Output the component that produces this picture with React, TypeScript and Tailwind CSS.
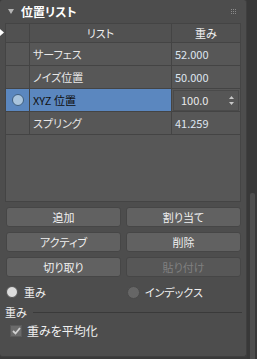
import React from "react";

const font = { fontFamily: '"Noto Sans CJK JP", "Liberation Sans", sans-serif' };

function Row({ name, value, selected }: { name: string; value: string; selected?: boolean }) {
  return (
    <div className={`flex h-[23px] border-b border-[#444] ${selected ? "bg-[#5b87bf]" : ""}`}>
      <div className="w-[24px] shrink-0 border-r border-[#444] flex items-center justify-center">
        {selected && <div className="w-[12px] h-[12px] rounded-full bg-[#a9c4dd] border border-[#3f5f80]" />}
      </div>
      <div className={`w-[142px] shrink-0 border-r border-[#444] flex items-center pl-[3px] ${selected ? "text-[#101010]" : "text-[#e8e8e8]"}`}>
        {name}
      </div>
      {selected ? (
        <div className="flex-1 flex items-center px-[1px] bg-[#585858]">
          <div className="flex-1 h-[21px] bg-[#565656] border border-[#4a4a4a] flex items-center justify-between pl-[7px] pr-[4px] text-[#eaeaea]">
            <span>{value}</span>
            <svg width="5" height="9" viewBox="0 0 5 9">
              <path d="M2.5 0 L5 3 L0 3 Z" fill="#c8c8c8" />
              <path d="M0 6 L5 6 L2.5 9 Z" fill="#c8c8c8" />
            </svg>
          </div>
        </div>
      ) : (
        <div className="flex-1 flex items-center pl-[3px] text-[#dfe6f0]">{value}</div>
      )}
    </div>
  );
}

function Btn({ label, disabled }: { label: string; disabled?: boolean }) {
  return (
    <div
      className={`h-[20px] rounded-[3px] border border-[#464646] flex items-center justify-center ${
        disabled ? "bg-[#575757] text-[#808080]" : "bg-[#616161] text-[#f0f0f0]"
      }`}
    >
      {label}
    </div>
  );
}

export default function App() {
  return (
    <div className="w-[257px] h-[359px] bg-[#3a3a3a] flex text-[11px] leading-none [font-feature-settings:'palt']" style={font}>
      <div className="relative w-[247px] h-[357px] bg-[#4d4d4d] rounded-[3px] border-r border-b border-[#3f3f3f] flex flex-col">
        {/* marker */}
        <svg className="absolute left-0 top-[29px]" width="4" height="7" viewBox="0 0 4 7">
          <path d="M0 0 L4 3.5 L0 7 Z" fill="#ffffff" />
        </svg>
        {/* title */}
        <div className="h-[23px] flex items-center pl-[8px] pr-[10px] shrink-0">
          <svg width="6" height="5" viewBox="0 0 6 5" className="mr-[7px]">
            <path d="M0 0 L6 0 L3 5 Z" fill="#b5b5b5" />
          </svg>
          <span className="text-white font-bold text-[12px]">位置リスト</span>
          <div className="ml-auto grid grid-cols-3 gap-[1px]">
            {Array.from({ length: 9 }).map((_, i) => (
              <div key={i} className="w-[1px] h-[1px] bg-[#8a8a8a]" />
            ))}
          </div>
        </div>
        {/* table */}
        <div className="ml-[5px] w-[236px] h-[179px] bg-[#575757] border border-[#444] flex flex-col shrink-0">
          <div className="flex h-[19px] border-b border-[#444] bg-[#515151] text-[#f0f0f0]">
            <div className="w-[24px] shrink-0 border-r border-[#444]" />
            <div className="w-[142px] shrink-0 border-r border-[#444] flex items-center justify-center">リスト</div>
            <div className="flex-1 flex items-center justify-center">重み</div>
          </div>
          <Row name="サーフェス" value="52.000" />
          <Row name="ノイズ位置" value="50.000" />
          <Row name="XYZ 位置" value="100.0" selected />
          <Row name="スプリング" value="41.259" />
        </div>
        {/* buttons */}
        <div className="ml-[6px] w-[235px] mt-[5px] grid grid-cols-2 gap-x-[5px] gap-y-[5px]">
          <Btn label="追加" />
          <Btn label="割り当て" />
          <Btn label="アクティブ" />
          <Btn label="削除" />
          <Btn label="切り取り" />
          <Btn label="貼り付け" disabled />
        </div>
        {/* radios */}
        <div className="flex items-center mt-[8px] h-[14px] text-[#f0f0f0]">
          <div className="flex items-center pl-[6px] w-[127px]">
            <div className="w-[12px] h-[12px] rounded-full bg-[#dcdcdc] border border-[#555]" />
            <span className="ml-[6px]">重み</span>
          </div>
          <div className="flex items-center">
            <div className="w-[13px] h-[13px] rounded-full bg-[#666666] border border-[#4a4a4a]" />
            <span className="ml-[5px]">インデックス</span>
          </div>
        </div>
        {/* group */}
        <div className="flex items-center mt-[8px] pl-[5px] pr-[4px] text-[#f0f0f0]">
          <span>重み</span>
          <div className="flex-1 ml-[6px] h-[1px] bg-[#3a3a3a]" />
        </div>
        <div className="flex items-center mt-[7px] pl-[10px] text-[#f0f0f0]">
          <div className="w-[12px] h-[12px] bg-[#6b6b6b] border border-[#5a5a5a] flex items-center justify-center">
            <svg width="9" height="8" viewBox="0 0 9 8">
              <path d="M1 4 L3.5 6.5 L8 1" stroke="#d0d0d0" strokeWidth="1.8" fill="none" />
            </svg>
          </div>
          <span className="ml-[5px] text-[12px]">重みを平均化</span>
        </div>
      </div>
      {/* scrollbar */}
      <div className="flex-1 flex flex-col items-center pt-[193px] bg-[#383838]">
        <div className="w-[5px] h-[166px] bg-[#4e4e4e] rounded-t-[2px]" />
      </div>
    </div>
  );
}
